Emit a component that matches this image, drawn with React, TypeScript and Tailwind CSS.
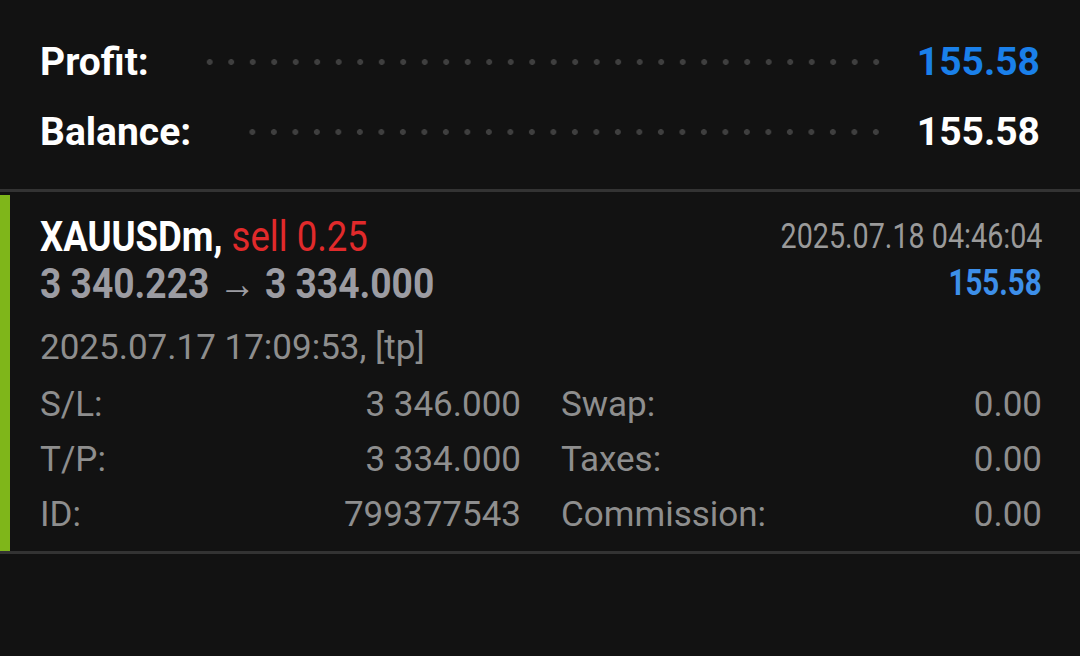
const roboto = { fontFamily: 'Roboto, "Liberation Sans", sans-serif' }

function Leader() {
  return (
    <div className="ml-[54px] mr-[30px] h-[8px] flex-1 self-center bg-[radial-gradient(circle,#3f3f3f_2.6px,transparent_3.2px)] bg-[length:21.5px_8px] bg-[position:right_center] bg-repeat-x" />
  )
}

function Condensed({ children, className }: { children: React.ReactNode; className?: string }) {
  return <span className={'inline-block whitespace-nowrap ' + (className ?? '')}>{children}</span>
}

const details = [
  ['S/L:', '3 346.000', 'Swap:', '0.00'],
  ['T/P:', '3 334.000', 'Taxes:', '0.00'],
  ['ID:', '799377543', 'Commission:', '0.00']
]

export default function App() {
  return (
    <div className="h-[656px] w-[1080px] overflow-hidden bg-[#121212]" style={roboto}>
      <div className="px-10 pt-[27px] pb-[22px]">
        <div className="flex h-[70px] items-center">
          <span className="text-[39px] font-bold text-white">Profit:</span>
          <Leader />
          <span className="text-[39px] font-bold text-[#1a80ea]">155.58</span>
        </div>
        <div className="flex h-[70px] items-center">
          <span className="text-[39px] font-bold text-white">Balance:</span>
          <Leader />
          <span className="text-[39px] font-bold text-white">155.58</span>
        </div>
      </div>

      <div className="h-[3px] bg-[#333333]" />

      <div className="mt-[3px] flex">
        <div className="w-[10px] bg-[#7fb61a]" />
        <div className="flex-1 pl-[30px] pr-[38px] pt-[18px] pb-[9px]">
          <div className="flex items-start justify-between">
            <div className="leading-[47px]">
              <div className="text-[42px]">
                <Condensed className="origin-left scale-x-[0.87]">
                  <span className="font-bold text-white">XAUUSDm, </span>
                  <span className="text-[#e12a2b]">sell 0.25</span>
                </Condensed>
              </div>
              <div className="text-[42px] font-bold text-[#9c9ca2]">
                <Condensed className="origin-left scale-x-[0.885]">3 340.223 → 3 334.000</Condensed>
              </div>
            </div>
            <div className="text-right leading-[47px]">
              <div className="text-[35px] text-[#9a9a9a]">
                <Condensed className="origin-right scale-x-[0.82]">2025.07.18 04:46:04</Condensed>
              </div>
              <div className="text-[36px] font-bold text-[#3d8fe9]">
                <Condensed className="origin-right scale-x-[0.82]">155.58</Condensed>
              </div>
            </div>
          </div>

          <div className="mt-[13px] text-[35px] leading-[55px] text-[#8e8e8e]">2025.07.17 17:09:53, [tp]</div>

          <div className="mt-[2px] grid grid-cols-2 gap-x-10 text-[35px] leading-[55px] text-[#8e8e8e]">
            {details.map(([l1, v1, l2, v2]) => (
              <div key={l1} className="contents">
                <div className="flex justify-between">
                  <span>{l1}</span>
                  <span>{v1}</span>
                </div>
                <div className="flex justify-between">
                  <span>{l2}</span>
                  <span>{v2}</span>
                </div>
              </div>
            ))}
          </div>
        </div>
      </div>

      <div className="h-[3px] bg-[#333333]" />
    </div>
  )
}
